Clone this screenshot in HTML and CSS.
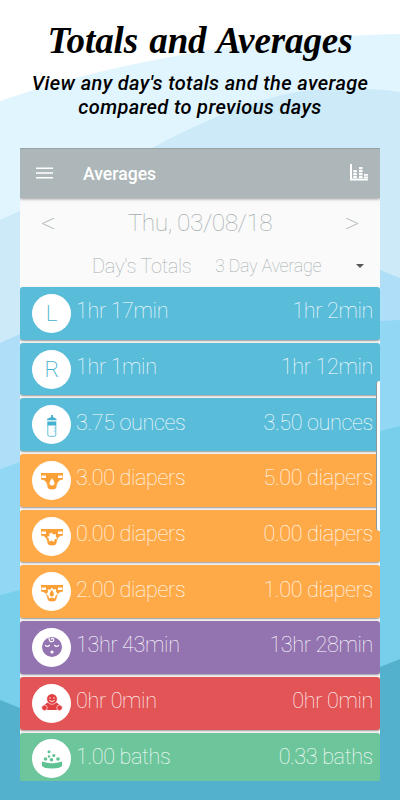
FILE: index.html
```
<!DOCTYPE html>
<html lang="en">
<head>
  <meta charset="UTF-8" />
  <meta name="viewport" content="width=device-width, initial-scale=1.0"/>
  <title>Totals and Averages</title>
  <link rel="stylesheet" href="styles.css">
</head>
<body>
  <div class="page">
    <svg class="waves" viewBox="0 0 400 800">
      <path fill="#e1f5ff" d="M0 101Q60 80 130 65T260 43T400 34V800H0Z"/>
      <path fill="#cdeaf9" d="M0 220Q80 183 154 147Q270 85 340 89Q375 88 400 92V800H0Z"/>
      <path fill="#afdff8" d="M0 343L20 334Q200 230 380 270L400 278V800H0Z"/>
      <path fill="#92d8f5" d="M0 469L20 462Q200 330 380 321L400 320V800H0Z"/>
      <path fill="#78cfeb" d="M0 595L20 590Q200 480 380 431L400 426V800H0Z"/>
      <path fill="#54b1ce" d="M0 700L20 708Q200 760 380 667L400 659V800H0Z"/>
    </svg>

    <header class="intro">
      <h1>Totals and Averages</h1>
      <p>View any day's totals and the average<br>compared to previous days</p>
    </header>

    <main class="phone">
      <div class="toolbar">
        <svg class="menu" viewBox="0 0 17 12"><path stroke="#fff" stroke-width="1.6" d="M0 1.2h17M0 6h17M0 10.8h17"/></svg>
        <h2>Averages</h2>
        <svg class="chart" viewBox="0 0 18 17"><path fill="#fff" d="M0 0h2v14.500h16v2H0zM3.300 6h3.500v2.300H3.300zM3.300 9h3.500v2.300H3.300zM3.300 12h3.500v2H3.300zM9 3h3.500v2.300H9zM9 6h3.500v2.300H9zM9 9h3.500v2.300H9zM9 12h3.500v2H9zM14 10h4v1.800h-4zM14 12.500h4V14h-4z"/></svg>
      </div>
      <div class="date">
        <span class="arrow">&lt;</span>
        <span>Thu, 03/08/18</span>
        <span class="arrow">&gt;</span>
      </div>
      <div class="columns">
        <span class="totals">Day's Totals</span>
        <span class="average">3 Day Average</span>
        <i class="caret"></i>
      </div>

      <div class="rows">
        <div class="row blue"><span class="badge">L</span><span>1hr 17min</span><span class="avg">1hr 2min</span></div>
        <div class="row blue"><span class="badge">R</span><span>1hr 1min</span><span class="avg">1hr 12min</span></div>
        <div class="row blue">
          <span class="badge">
            <svg viewBox="0 0 38 38"><path fill="currentColor" d="M18.200 9h1.800v2l3.500 2v1.300H14V13l4.200-2zM14.300 15.500h9v4h-9z"/><rect x="14.800" y="18" width="8" height="12.300" rx="1.500" fill="none" stroke="currentColor" stroke-width=".8"/><path stroke="currentColor" stroke-width=".6" d="M20.500 22h2M20.500 25h2"/></svg>
          </span>
          <span>3.75 ounces</span><span class="avg">3.50 ounces</span>
        </div>
        <div class="row orange">
          <span class="badge">
            <svg viewBox="0 0 38 38"><path fill="currentColor" d="M8 12h22v6.500l-2.500.5q-3.500 1.500-4 7-.5 2.500-4.500 2.500t-4.500-2.500q-.5-5.500-4-7L8 18.500z"/><path fill="#fff" d="M8.500 14.500h4.500v2.500H8.500zM25 14.500h4.500v2.500H25zM19 17.200q2.500 3.200 2.500 4.800a2.500 2.500 0 0 1-5 0q0-1.600 2.500-4.800"/></svg>
          </span>
          <span>3.00 diapers</span><span class="avg">5.00 diapers</span>
        </div>
        <div class="row orange">
          <span class="badge">
            <svg viewBox="0 0 38 38"><path fill="currentColor" d="M8 12h22v6.500l-2.500.5q-3.500 1.500-4 7-.5 2.500-4.500 2.500t-4.500-2.500q-.5-5.500-4-7L8 18.500z"/><path fill="#fff" d="M8.500 14.500h4.500v2.500H8.500zM25 14.500h4.500v2.500H25zM18.500 15.500l1.800 2 2.600-.6-.2 2.700 1.700 1.900-2.600.8-.9 2.600-2.300-1.400-2.600.9-.1-2.700-1.900-1.700 2.500-1-.1-2.200z"/></svg>
          </span>
          <span>0.00 diapers</span><span class="avg">0.00 diapers</span>
        </div>
        <div class="row orange">
          <span class="badge">
            <svg viewBox="0 0 38 38"><path fill="currentColor" d="M8 12h22v6.500l-2.500.5q-3.500 1.500-4 7-.5 2.500-4.500 2.500t-4.500-2.500q-.5-5.500-4-7L8 18.500z"/><path fill="#fff" d="M8.500 14.500h4.500v2.500H8.500zM25 14.500h4.500v2.500H25zM18.500 14.500l2 2 2.600-.4v3l1.900 2-2.300 1.300-.9 3-2.800-1-2.800 1-.9-2.800-2.300-1.500 2-1.900-.3-2.800 2.600.3z"/><path fill="currentColor" d="M18.800 16.700q2.200 3 2.200 4.600a2.200 2.200 0 0 1-4.400 0q0-1.600 2.200-4.600"/></svg>
          </span>
          <span>2.00 diapers</span><span class="avg">1.00 diapers</span>
        </div>
        <div class="row purple">
          <span class="badge">
            <svg viewBox="0 0 38 38"><circle cx="19" cy="19" r="10" fill="currentColor"/><path fill="none" stroke="#fff" stroke-width="1.200" d="M12 17q2 2.800 4.800 0M21.200 17q2.800 2.800 4.800 0M16 9.500q0 4.500 3 4.200 2.500-.7 1.500-2.700-1.500-1.500-2.300.6"/><circle cx="19" cy="24" r="1.600" fill="#fff"/></svg>
          </span>
          <span>13hr 43min</span><span class="avg">13hr 28min</span>
        </div>
        <div class="row red">
          <span class="badge">
            <svg viewBox="0 0 38 38"><path fill="currentColor" d="M14.500 18.500L19 20l4.500-1.500 4.200 3.200-3 2.500V26H13.300v-1.800l-3-2.500z"/><g fill="currentColor" stroke="#fff" stroke-width=".6"><circle cx="11.500" cy="23.800" r="2.800"/><circle cx="26.500" cy="23.800" r="2.800"/><circle cx="19" cy="15" r="5.300"/></g><circle cx="17" cy="14" r=".7" fill="#fff"/><circle cx="21" cy="14" r=".7" fill="#fff"/><path fill="none" stroke="#fff" stroke-width=".9" d="M16.300 16.300q2.700 2.700 5.400 0"/></svg>
          </span>
          <span>0hr 0min</span><span class="avg">0hr 0min</span>
        </div>
        <div class="row green">
          <span class="badge">
            <svg viewBox="0 0 38 38"><path fill="currentColor" d="M9 21.500q10 3.500 20 0v4.500q-2 2.500-10 2.500T9 26z"/><g fill="currentColor"><circle cx="12.500" cy="19" r="1.800"/><circle cx="16" cy="16.500" r="1.300"/><circle cx="18.500" cy="19.800" r="1.800"/><circle cx="20.800" cy="15.500" r="1.600"/><circle cx="25" cy="19" r="1.800"/><circle cx="16" cy="11.800" r="1.500"/></g></svg>
          </span>
          <span>1.00 baths</span><span class="avg">0.33 baths</span>
        </div>
      </div>
      <div class="scrollbar"></div>
    </main>
  </div>
</body>
</html>
```
FILE: styles.css
```
body {
  margin: 0;
  font-family: Roboto, sans-serif;
}
.page {
  position: relative;
  width: 400px;
  height: 800px;
  overflow: hidden;
  background: #fff;
}
.waves {
  position: absolute;
  top: 0;
  left: 0;
  width: 400px;
  height: 800px;
}
.intro {
  position: relative;
  height: 148px;
  text-align: center;
  color: #000;
}
h1 {
  margin: 0;
  padding-top: 20px;
  font: italic bold 37px/42px "Brush Script MT", "Liberation Serif", serif;
  letter-spacing: -0.1px;
  word-spacing: 2px;
  white-space: nowrap;
}
.intro p {
  margin: 9px 0 0;
  font-size: 20px;
  font-style: italic;
  font-weight: 500;
  line-height: 24px;
  letter-spacing: 0.36px;
  white-space: nowrap;
}
.phone {
  position: relative;
  width: 360px;
  height: 633px;
  margin: 0 auto;
  overflow: hidden;
  background: #fafafa;
}
.toolbar {
  box-sizing: border-box;
  height: 49.5px;
  display: flex;
  align-items: center;
  padding: 0 12px 0 16px;
  background: #adb7b9;
  border-top: 1px solid #98a3a4;
  box-shadow: 0 1px 3px rgba(0,0,0,0.4);
  color: #fff;
}
.menu {
  width: 17px;
  height: 12px;
}
.toolbar h2 {
  margin: 1px 0 0 30px;
  font-size: 17.6px;
  font-weight: 500;
}
.chart {
  width: 18px;
  height: 17px;
  margin: -2px 0 0 auto;
}
.date {
  height: 50px;
  display: flex;
  align-items: center;
  justify-content: space-between;
  padding: 0 21px;
  color: #a3acae;
  font-size: 24.5px;
  font-weight: 100;
  letter-spacing: -0.5px;
}
.arrow {
  font-size: 29px;
}
.columns {
  box-sizing: border-box;
  height: 39.5px;
  display: flex;
  align-items: center;
  padding-bottom: 3px;
  color: #a3acae;
  font-size: 20px;
  font-weight: 100;
  letter-spacing: -0.3px;
  white-space: nowrap;
}
.totals {
  width: 123px;
  padding-left: 72px;
}
.average {
  font-size: 18px;
}
.caret {
  margin-left: auto;
  margin-right: 16px;
  border: 4.5px solid transparent;
  border-top-color: #555;
  border-bottom: 0;
}
.rows {
  display: grid;
  gap: 3px;
}
.row {
  box-sizing: border-box;
  height: 52.7px;
  display: flex;
  align-items: center;
  padding: 0 7px 5px 12px;
  border-radius: 3px;
  box-shadow: 0 1px 2px rgba(0,0,0,0.4);
  color: #fff;
  font-size: 21.6px;
  font-weight: 100;
  letter-spacing: -0.35px;
}
.avg {
  margin-left: auto;
}
.badge {
  width: 39px;
  height: 39px;
  display: flex;
  align-items: center;
  justify-content: center;
  margin: 5px 5px 0 0;
  border-radius: 50%;
  background: #fff;
  font-size: 22.5px;
  font-weight: 200;
}
.badge svg {
  width: 38px;
  height: 38px;
}
.blue {
  background: #59bcd9;
}
.blue .badge {
  color: #45b1d0;
}
.orange {
  background: #ffaa48;
}
.orange .badge {
  color: #faa037;
}
.purple {
  background: #9373b0;
}
.purple .badge {
  color: #9373b0;
}
.red {
  background: #e25455;
}
.red .badge {
  color: #e13f42;
}
.green {
  background: #6dc59b;
}
.green .badge {
  color: #5fc293;
}
.scrollbar {
  position: absolute;
  top: 233px;
  right: 0;
  width: 3px;
  height: 150px;
  background: #fff;
  border-left: 1px solid #899;
  border-radius: 3px 0 0 3px;
}
```
